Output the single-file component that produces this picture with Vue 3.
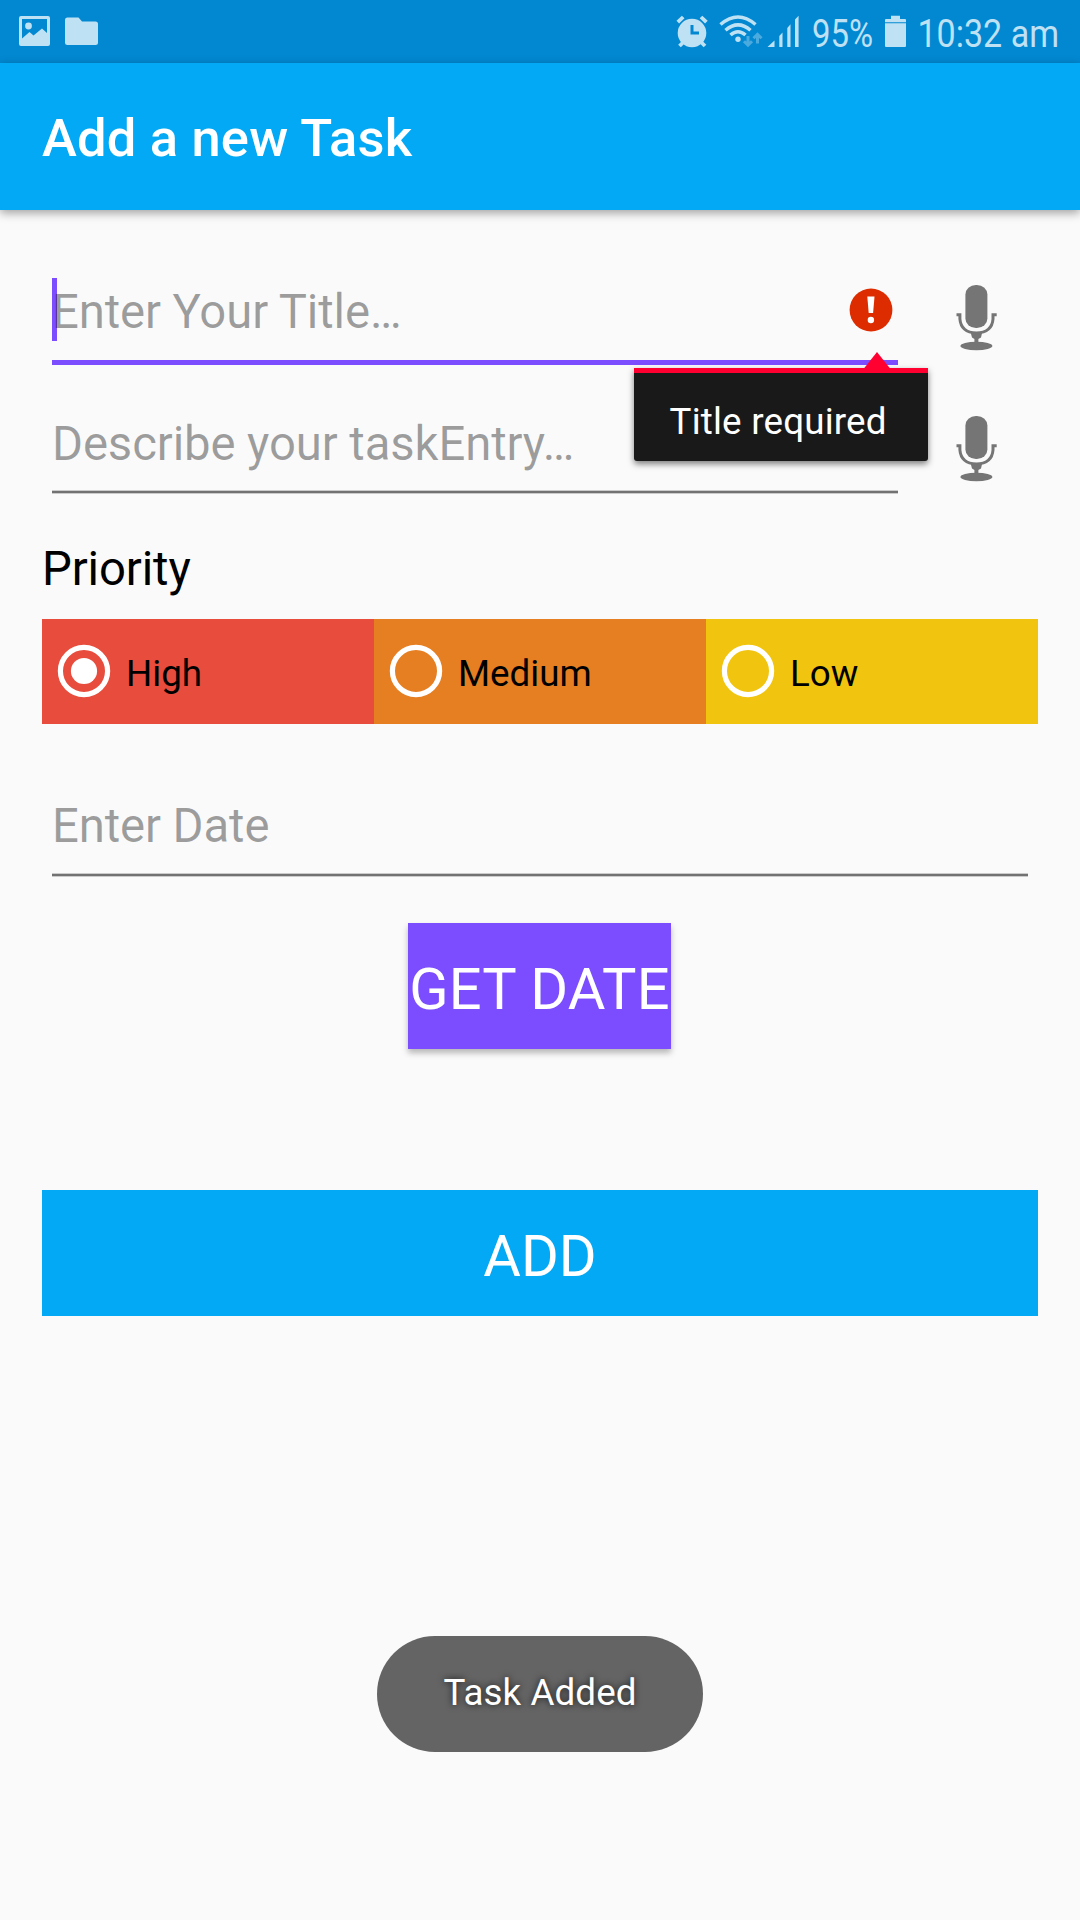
<script setup>
import { ref } from 'vue'

const priorities = [
  { name: 'High', tone: 'high' },
  { name: 'Medium', tone: 'medium' },
  { name: 'Low', tone: 'low' }
]
const selected = ref('High')
const fields = [
  { hint: 'Enter Your Title…', active: true },
  { hint: 'Describe your taskEntry…', active: false }
]
</script>

<template>
  <div class="screen">
    <div class="status">
      <svg class="pic" width="32" height="31" viewBox="19 16 32 31">
        <path fill-rule="evenodd" d="M21 16H48Q50 16 50 18V44Q50 46 48 46H21Q19 46 19 44V18Q19 16 21 16ZM22 19V38.5L29.5 32L33.5 35.5L42 28.5L47 33V19Z" />
        <circle cx="28.5" cy="26" r="3.4" />
      </svg>
      <svg class="folder" width="33" height="31" viewBox="65 16 33 31">
        <path d="M67.5 17.5H78.5L82 21.5H95.5Q98 21.5 98 24V42.5Q98 45 95.5 45H67.5Q65 45 65 42.5V20Q65 17.5 67.5 17.5Z" />
      </svg>
      <span class="spacer"></span>
      <svg width="33" height="34" viewBox="676 15 33 34">
        <circle cx="692" cy="33" r="14.3" />
        <path class="line" stroke-width="3.8" d="M677.8 22.2L683.2 17M701 17L706.4 22.2M683 42.5L679.5 46M701.5 42.5L705 46" />
        <path class="cut" d="M692 25V33H699" />
      </svg>
      <svg class="wifi" width="44" height="34" viewBox="719 15 44 34">
        <path class="line" stroke-width="3.5" d="M720.5 24.5Q738 9.5 755.5 24.5M725.5 30.3Q738 19.5 750.5 30.3M730.5 35Q738 28.5 745.5 35" />
        <circle cx="738" cy="39.3" r="2.7" />
        <path class="traffic" d="M748 36V45M744 41.2L748 45.2L752 41.2M757.5 43.5V34.5M753.5 38.3L757.5 34.3L761.5 38.3" />
      </svg>
      <svg class="signal" width="33" height="34" viewBox="767 15 33 34">
        <path d="M767.5 47L774.5 40.5V47ZM779.3 47V36L782.5 32.5V47ZM787.3 47V28L790.5 24.3V47ZM795 47V19.5L798.6 15.7V47Z" />
      </svg>
      <svg class="pct" width="64" height="60" viewBox="811 3 64 60">
        <text x="812" y="47" textLength="61" lengthAdjust="spacingAndGlyphs">95%</text>
      </svg>
      <svg class="battery" width="22" height="34" viewBox="885 15 22 34">
        <path d="M891 15.7H900V19H905Q906 19 906 20V22.3H885V20Q885 19 886 19H891ZM885 23.3H906V46Q906 47 905 47H886Q885 47 885 46Z" />
      </svg>
      <svg class="clock" width="144" height="60" viewBox="917 3 144 60">
        <text x="917.5" y="47" textLength="141.5" lengthAdjust="spacingAndGlyphs">10:32 am</text>
      </svg>
    </div>

    <header class="bar"><h1>Add a new Task</h1></header>

    <main class="form">
      <div v-for="f in fields" :key="f.hint" class="row">
        <div class="field" :class="{ active: f.active }">
          <span class="hint">{{ f.hint }}</span>
          <span v-if="f.active" class="caret"></span>
          <svg v-if="f.active" class="error" width="44" height="44" viewBox="0 0 44 44">
            <circle cx="22" cy="22" r="21.4" fill="#dd2c00" />
            <path fill="#fff" d="M18.3 8.5H25.5L24.1 25H19.7Z" />
            <circle cx="21.9" cy="32" r="3.2" fill="#fff" />
          </svg>
          <div v-if="f.active" class="popup">
            <svg class="arrow" width="28" height="17" viewBox="0 0 28 17"><path fill="#ff0031" d="M14 0L27.5 17H.5Z" /></svg>
            Title required
          </div>
        </div>
        <svg class="mic" width="42" height="68" viewBox="0 0 42 68">
          <rect x="9.4" y="1" width="22" height="43" rx="10.5" ry="9.5" />
          <path class="stand" d="M.5 30.8H3.9V35Q5 48.5 20.4 49Q36 48.5 37 35V30.8H40.7" />
          <path d="M14.5 48H26.3L25 53.5L22.4 55V60H18.4V55L16 53.5Z" />
          <ellipse cx="20.4" cy="62" rx="16" ry="4.2" />
        </svg>
      </div>

      <div class="label">Priority</div>
      <div class="radios">
        <div v-for="p in priorities" :key="p.name" class="radio" :class="p.tone" @click="selected = p.name">
          <svg width="54" height="54" viewBox="0 0 54 54">
            <circle cx="27" cy="27" r="23.6" fill="none" stroke="#fff" stroke-width="5.2" />
            <circle v-if="selected === p.name" cx="27" cy="27" r="13.1" fill="#fff" />
          </svg>
          <span>{{ p.name }}</span>
        </div>
      </div>

      <div class="field date"><span class="hint">Enter Date</span></div>
      <div class="btn get">GET DATE</div>
      <div class="btn add">ADD</div>
    </main>

    <div class="toast">Task Added</div>
  </div>
</template>

<style>
body { margin: 0; background: #fafafa; }
</style>

<style scoped>
.screen {
  width: 1080px; height: 1920px; overflow: hidden;
  display: flex; flex-direction: column;
  background: #fafafa; font-family: Roboto, "Liberation Sans", sans-serif;
  white-space: nowrap;
}
svg { display: block; flex: none; overflow: visible; }
.status {
  height: 63px; flex: none; box-sizing: border-box; padding: 0 19px 0 19px;
  display: flex; align-items: center; background: #0288d1; fill: #bfe1f4;
}
.status text { font-size: 39.5px; fill: #bfe1f4; }
.pct, .clock { margin-top: 3px; }
.folder { margin-left: 14px; }
.spacer { flex: 1; }
.wifi { margin-left: 10px; }
.signal { margin-left: 4px; }
.pct { margin-left: 11px; }
.battery { margin-left: 10px; }
.clock { margin-left: 10px; }
.line { fill: none; stroke: #bfe1f4; }
.cut { fill: none; stroke: #0288d1; stroke-width: 3; }
.traffic { fill: none; stroke: #4babdf; stroke-width: 3; }
.bar {
  height: 147px; flex: none; background: #03a9f4; position: relative;
  box-shadow: 0 3px 9px rgba(0, 0, 0, .36);
}
h1 {
  margin: 0; padding: 3px 0 0 42px; line-height: 144px; letter-spacing: .18px;
  font-size: 52.5px; font-weight: 500; color: #fff;
}
.form { padding: 55px 42px 0; display: flex; flex-direction: column; }
.row { display: flex; height: 131px; }
.field {
  position: relative; box-sizing: border-box; width: 846px; height: 101px; margin-left: 10px;
}
.field::after {
  content: ""; position: absolute; left: 0; right: 0; bottom: 4px; height: 2px;
  background: #727272; box-shadow: 0 0 0 1px rgba(114, 114, 114, .35); clip-path: inset(-1px 0);
}
.field.date::after { bottom: 3px; }
.field.active::after { height: 5px; bottom: 1px; background: #7c4dff; box-shadow: none; }
.hint {
  display: block; position: relative; z-index: 1; line-height: 64px; padding-top: 16px;
  font-size: 47.25px; letter-spacing: -.1px; color: rgba(0, 0, 0, .38);
}
.active .hint { padding-top: 15px; }
.caret { position: absolute; left: 0; top: 13px; width: 5px; height: 63px; background: #7c4dff; }
.error { position: absolute; left: 797px; top: 22.5px; }
.popup {
  position: absolute; z-index: 3; left: 581.5px; top: 103px; width: 294px; height: 93px;
  box-sizing: border-box; padding-left: 36px; border-top: 5px solid #ff0031; border-radius: 0 0 3px 3px;
  background: #191919; color: #fff; font-size: 36.75px; line-height: 97px; letter-spacing: .2px;
  box-shadow: 0 3px 6px rgba(0, 0, 0, .5);
}
.arrow { position: absolute; left: 229.5px; top: -21px; }
.mic { margin: 19px 0 0 58px; fill: #757575; }
.stand { fill: none; stroke: #757575; stroke-width: 3; }
.label { margin-top: 10px; height: 82px; line-height: 64px; font-size: 47.25px; letter-spacing: -.12px; color: #000; }
.radios { display: flex; height: 105px; }
.radio {
  flex: 1; display: flex; align-items: center; padding-left: 15px;
  font-size: 36.75px; color: #000;
}
.radio svg { margin-bottom: 1px; }
.radio span { margin: 3px 0 0 15px; }
.high { background: #e74c3c; }
.medium { background: #e67e22; }
.low { background: #f1c40f; }
.date { width: 976px; margin-top: 54px; }
.btn { color: #fff; text-align: center; font-size: 57.75px; height: 126px; line-height: 132px; box-sizing: border-box; }
.get {
  width: 263px; margin: 44px 0 0 366px; background: #7c4dff; letter-spacing: .2px;
  box-shadow: 0 4px 6px rgba(0, 0, 0, .27);
}
.add { margin-top: 141px; background: #03a9f4; }
.toast {
  width: 326px; height: 116px; margin: 320px auto 0; border-radius: 58px;
  background: #646464; color: #fff; font-size: 36.75px; line-height: 114px; letter-spacing: .1px; text-align: center;
  text-shadow: 0 0 7px rgba(0, 0, 0, .75);
}
</style>
